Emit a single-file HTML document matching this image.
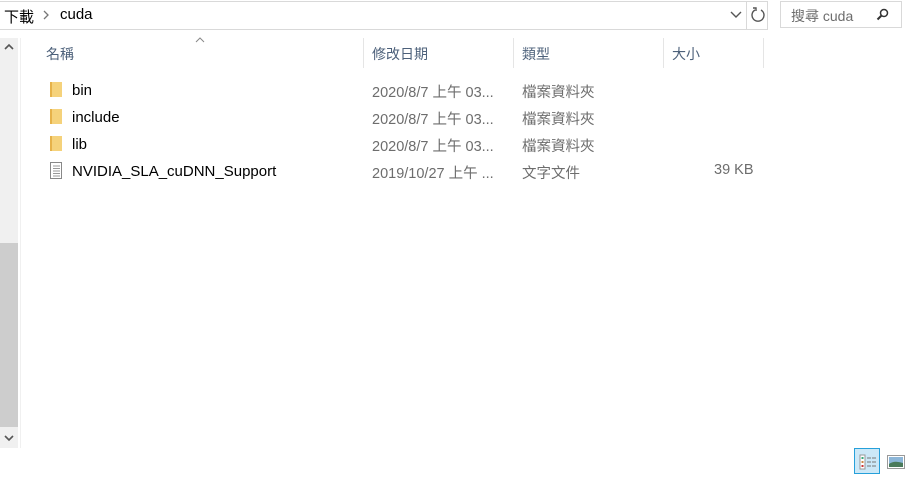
<!DOCTYPE html>
<html><head><meta charset="utf-8"><style>
body{margin:0;width:916px;height:477px;background:#fff;position:relative;overflow:hidden;font-family:"Liberation Sans","Noto Sans CJK TC",sans-serif;font-size:14px;color:#000}
.a{position:absolute;white-space:nowrap}
.g{color:#6d6d6d;font-size:14.5px}
.hd{color:#4c607a}
.sep{position:absolute;top:38px;width:1px;height:30px;background:#e5e5e5}
.fold{position:absolute;width:10px;height:15px;background:#f5d27b;border-left:2px solid #e6b24a}
</style></head><body>
<div class="a" style="left:0;top:1px;width:767px;height:27px;border-top:1px solid #d9d9d9;border-bottom:1px solid #d9d9d9;border-right:1px solid #d9d9d9"></div>
<div class="a" style="left:746px;top:1px;width:1px;height:28px;background:#d9d9d9"></div>
<div class="a" style="left:4px;top:6px;font-size:15px">下載</div>
<svg class="a" style="left:42px;top:10px" width="8" height="10"><path d="M2 1l4 4-4 4" stroke="#777" fill="none" stroke-width="1.3"/></svg>
<div class="a" style="left:60px;top:6px;font-size:15px">cuda</div>
<svg class="a" style="left:730px;top:11px" width="12" height="8"><path d="M1 1l5 5 5-5" stroke="#555" fill="none" stroke-width="1.4"/></svg>
<svg class="a" style="left:750px;top:6px" width="16" height="18"><path d="M5 4A6 6 0 1 0 11 4" stroke="#555" fill="none" stroke-width="1.4"/><path d="M3 2h3v3" stroke="#555" fill="none" stroke-width="1.4"/></svg>
<div class="a" style="left:780px;top:1px;width:122px;height:27px;border:1px solid #d9d9d9;box-sizing:border-box"></div>
<div class="a g" style="left:791px;top:6px;font-size:14px">搜尋 cuda</div>
<svg class="a" style="left:876px;top:8px" width="14" height="14"><circle cx="8" cy="5" r="3.5" stroke="#333" fill="none" stroke-width="1.5"/><path d="M5.5 7.5L1.5 11.5" stroke="#333" stroke-width="2"/></svg>
<div class="a" style="left:0;top:38px;width:18px;height:410px;background:#f0f0f0"></div>
<div class="a" style="left:0;top:243px;width:18px;height:184px;background:#cdcdcd"></div>
<svg class="a" style="left:4px;top:43px" width="10" height="8"><path d="M1 6l4-4 4 4" stroke="#555" fill="none" stroke-width="1.6"/></svg>
<svg class="a" style="left:4px;top:434px" width="10" height="8"><path d="M1 2l4 4 4-4" stroke="#555" fill="none" stroke-width="1.6"/></svg>
<div class="a" style="left:20px;top:38px;width:1px;height:410px;background:#f0f0f0"></div>
<svg class="a" style="left:195px;top:37px" width="10" height="7"><path d="M1 5l4-4 4 4" stroke="#888" fill="none"/></svg>
<div class="a hd" style="left:46px;top:44px">名稱</div>
<div class="a hd" style="left:372px;top:44px">修改日期</div>
<div class="a hd" style="left:522px;top:44px">類型</div>
<div class="a hd" style="left:672px;top:44px">大小</div>
<div class="sep" style="left:363px"></div><div class="sep" style="left:513px"></div><div class="sep" style="left:663px"></div><div class="sep" style="left:763px"></div>
<div class="fold" style="left:50px;top:82px"></div>
<div class="fold" style="left:50px;top:109px"></div>
<div class="fold" style="left:50px;top:136px"></div>
<svg class="a" style="left:50px;top:162px" width="13" height="17"><path d="M.5 .5h11v16h-11z" fill="#fff" stroke="#888"/><path d="M3 4h7M3 6.5h7M3 9h7M3 11.5h7M3 14h7" stroke="#999"/></svg>
<div class="a" style="left:72px;top:82px;font-size:15px">bin</div>
<div class="a" style="left:72px;top:109px;font-size:15px">include</div>
<div class="a" style="left:72px;top:136px;font-size:15px">lib</div>
<div class="a" style="left:72px;top:163px;font-size:15px">NVIDIA_SLA_cuDNN_Support</div>
<div class="a g" style="left:372px;top:81px">2020/8/7 上午 03...</div>
<div class="a g" style="left:372px;top:108px">2020/8/7 上午 03...</div>
<div class="a g" style="left:372px;top:135px">2020/8/7 上午 03...</div>
<div class="a g" style="left:372px;top:162px">2019/10/27 上午 ...</div>
<div class="a g" style="left:522px;top:81px">檔案資料夾</div>
<div class="a g" style="left:522px;top:108px">檔案資料夾</div>
<div class="a g" style="left:522px;top:135px">檔案資料夾</div>
<div class="a g" style="left:522px;top:162px">文字文件</div>
<div class="a g" style="left:714px;top:162px">39 KB</div>
<div class="a" style="left:854px;top:448px;width:26px;height:26px;background:#cce8f7;border:1px solid #26a0da;box-sizing:border-box"></div>
<svg class="a" style="left:859px;top:454px" width="20" height="16"><rect x="1" y="1" width="5" height="14" fill="#fff" stroke="#999"/><rect x="2.5" y="3" width="2" height="2" fill="#3a7"/><rect x="2.5" y="7" width="2" height="2" fill="#c84"/><rect x="2.5" y="11" width="2" height="2" fill="#c33"/><path d="M8 4h4M13 4h4M8 8h4M13 8h4M8 12h4M13 12h4" stroke="#777"/></svg>
<svg class="a" style="left:887px;top:455px" width="18" height="14"><rect x=".5" y=".5" width="17" height="13" fill="#fff" stroke="#999"/><rect x="2" y="2" width="14" height="10" fill="#8cb6d8"/><path d="M2 9q5-4 14-1v4H2z" fill="#4a7a5a"/></svg>
</body></html>
